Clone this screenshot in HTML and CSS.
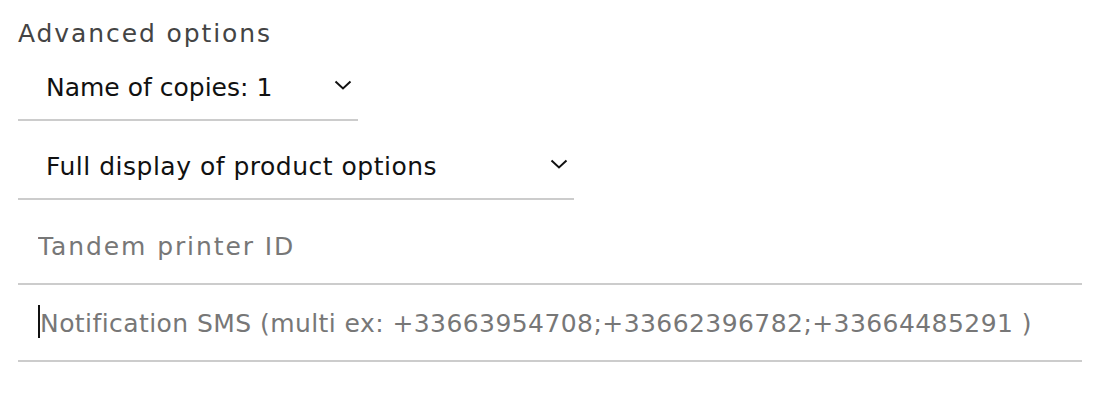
FILE: index.html
```html
<!DOCTYPE html>
<html lang="en">
<head>
  <meta charset="UTF-8" />
  <meta name="viewport" content="width=device-width, initial-scale=1.0"/>
  <title>Advanced options</title>
  <link rel="stylesheet" href="styles.css">
</head>
<body>
  <div class="panel">
    <h3 class="panel-title">Advanced options</h3>

    <div class="dropdown dropdown-copies">
      <span class="dropdown-label">Name of copies: 1</span>
      <svg class="chevron" width="18" height="10" viewBox="0 0 18 10">
        <path d="M1.5 1.5 L9 8.5 L16.5 1.5" fill="none" stroke="#111" stroke-width="2"/>
      </svg>
    </div>

    <div class="dropdown dropdown-display">
      <span class="dropdown-label">Full display of product options</span>
      <svg class="chevron" width="18" height="10" viewBox="0 0 18 10">
        <path d="M1.5 1.5 L9 8.5 L16.5 1.5" fill="none" stroke="#111" stroke-width="2"/>
      </svg>
    </div>

    <div class="form-group tandem">
      <input type="text" class="text-input" placeholder="Tandem printer ID" />
    </div>
    <div class="form-group sms focused">
      <input type="text" class="text-input" placeholder="Notification SMS (multi ex: +33663954708;+33662396782;+33664485291 )" />
    </div>
  </div>
</body>
</html>
```

FILE: styles.css
```css
* {
  box-sizing: border-box;
  margin: 0;
  padding: 0;
}

body {
  background: #fff;
  font-family: 'DejaVu Sans', sans-serif;
  color: #111;
}

.panel {
  display: flex;
  flex-direction: column;
  align-items: flex-start;
  padding: 0 18px;
  width: 1100px;
}

.panel-title {
  margin-top: 26px;
  font-size: 25px;
  font-weight: normal;
  line-height: 16px;
  letter-spacing: 1.9px;
  color: #444;
}

.dropdown {
  display: flex;
  align-items: center;
  justify-content: space-between;
  height: 79px;
  padding: 14px 6px 0 28px;
  border-bottom: 2px solid #ccc;
  font-size: 25px;
}

.dropdown-copies {
  width: 340px;
}

.dropdown-display {
  width: 556px;
  letter-spacing: 0.5px;
}

.chevron {
  display: block;
  margin-bottom: 6px;
}

.form-group {
  position: relative;
  width: 1064px;
  border-bottom: 2px solid #ccc;
}

.text-input {
  display: block;
  width: 100%;
  border: none;
  outline: none;
  background: transparent;
  font-family: inherit;
  font-size: 25px;
  color: #111;
}

.text-input::placeholder {
  color: #777;
  opacity: 1;
}

.tandem .text-input {
  height: 83px;
  padding: 10px 0 0 20px;
  letter-spacing: 1.9px;
}

.sms .text-input {
  height: 75px;
  padding: 2px 0 0 22px;
  letter-spacing: 0.43px;
}

/* fake caret for the focused field */
.form-group.focused::before {
  content: "";
  position: absolute;
  left: 20px;
  top: 20px;
  width: 2px;
  height: 33px;
  background: #111;
}
```
